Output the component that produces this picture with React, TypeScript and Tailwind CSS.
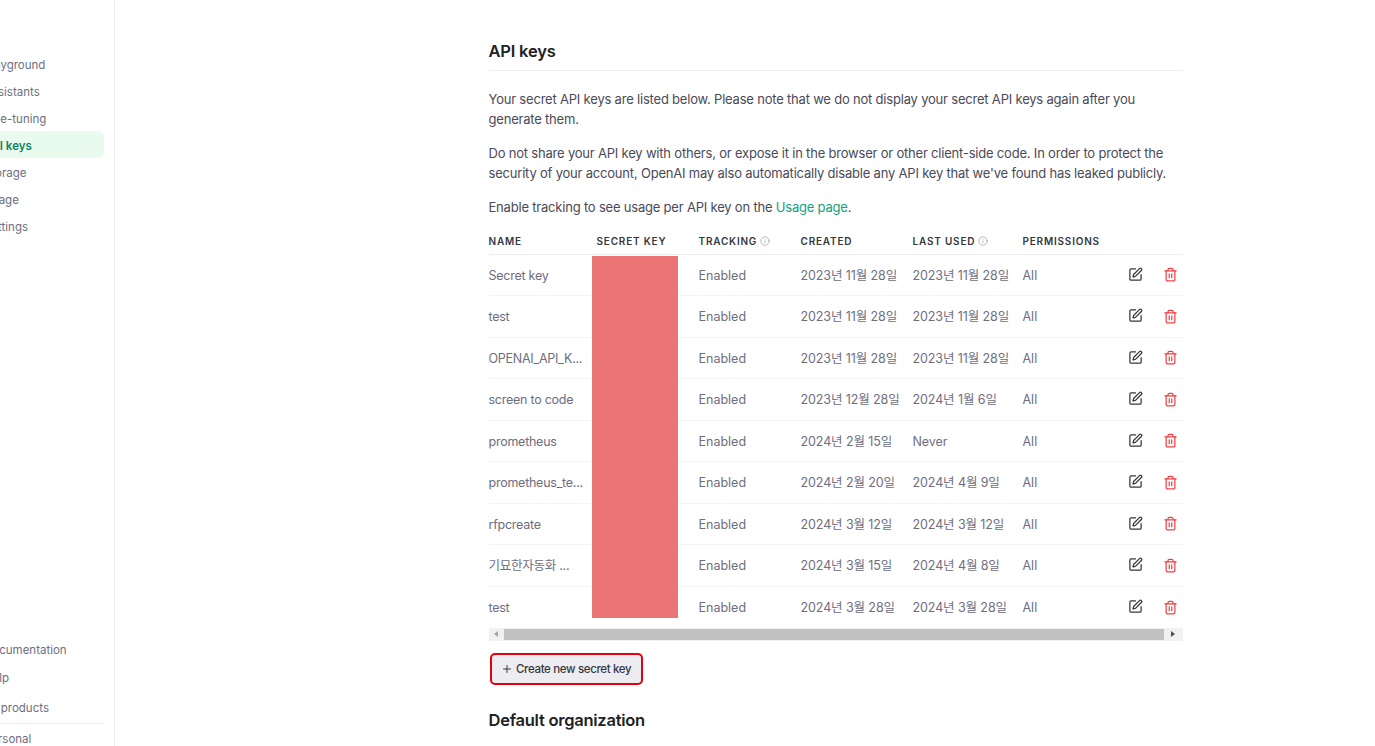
import { Plus, Info, SquarePen, Trash2 } from 'lucide-react'

const sideTop = [
  { label: 'Playground', active: false },
  { label: 'Assistants', active: false },
  { label: 'Fine-tuning', active: false },
  { label: 'API keys', active: true },
  { label: 'Storage', active: false },
  { label: 'Usage', active: false },
  { label: 'Settings', active: false },
]

const keys = [
  { name: 'Secret key', created: '2023년 11월 28일', used: '2023년 11월 28일' },
  { name: 'test', created: '2023년 11월 28일', used: '2023년 11월 28일' },
  { name: 'OPENAI_API_K...', created: '2023년 11월 28일', used: '2023년 11월 28일' },
  { name: 'screen to code', created: '2023년 12월 28일', used: '2024년 1월 6일' },
  { name: 'prometheus', created: '2024년 2월 15일', used: 'Never' },
  { name: 'prometheus_te...', created: '2024년 2월 20일', used: '2024년 4월 9일' },
  { name: 'rfpcreate', created: '2024년 3월 12일', used: '2024년 3월 12일' },
  { name: '기묘한자동화 ...', created: '2024년 3월 15일', used: '2024년 4월 8일' },
  { name: 'test', created: '2024년 3월 28일', used: '2024년 3월 28일' },
]

const App = () => {
  return (
    <div className="flex h-[746px] overflow-hidden bg-white text-[13px] text-[#6e6e80] font-['Inter','Noto_Sans_CJK_KR',sans-serif]">
      {/* Sidebar, cut off by the window's left edge */}
      <aside className="flex h-full w-[115px] shrink-0 flex-col justify-between overflow-hidden border-r border-[#ececf1] pt-[50px]">
        <nav className="flex flex-col">
          {sideTop.map((item) => (
            <div
              key={item.label}
              className={`ml-[-40px] mr-[10px] flex h-[27px] items-center rounded-[6px] pl-[24px] pt-[5px] text-[11.5px] whitespace-nowrap ${
                item.active ? 'bg-[#e9fbee] font-semibold text-[#10845f]' : 'text-[#6e6e80]'
              }`}
            >
              {item.label}
            </div>
          ))}
        </nav>
        <div className="flex flex-col text-[11.5px]">
          <div className="ml-[-40px] flex h-[26px] items-center pl-[24px] pt-[2px] whitespace-nowrap">Documentation</div>
          <div className="ml-[-40px] flex h-[30px] items-center pl-[24px] pt-[2px] whitespace-nowrap">Help</div>
          <div className="ml-[-40px] flex h-[30px] items-center pl-[24px] pt-[2px] whitespace-nowrap">All products</div>
          <div className="mr-[10px] flex h-[23px] items-center border-t border-[#ececf1] pt-[10px]">
            <span className="ml-[-16px] whitespace-nowrap">Personal</span>
          </div>
        </div>
      </aside>

      {/* Main column */}
      <main className="ml-[373.5px] w-[694.5px] shrink-0 pt-[41px]">
        <h2 className="border-b border-[#ececf1] pb-[8px] text-[16.5px] leading-[21px] font-semibold tracking-[-0.2px] text-[#202123]">API keys</h2>
        <p className="mt-[18px] text-[13px] leading-[20px] tracking-[-0.2px] text-[#4a4a57]">
          Your secret API keys are listed below. Please note that we do not display your secret API keys again after you generate them.
        </p>
        <p className="mt-[14px] text-[13px] leading-[20px] tracking-[-0.2px] text-[#4a4a57]">
          Do not share your API key with others, or expose it in the browser or other client-side code. In order to protect the security of your account, OpenAI may also automatically disable any API key that we've found has leaked publicly.
        </p>
        <p className="mt-[14px] text-[13px] leading-[20px] tracking-[-0.2px] text-[#4a4a57]">
          Enable tracking to see usage per API key on the <span className="text-[#10a37f]">Usage page</span>.
        </p>

        {/* Keys table */}
        <div className="relative mt-[11.5px]">
          <div className="flex h-[26px] items-center border-b border-[#ececf1] text-[10px] font-semibold tracking-[0.08em] text-[#353740]">
            <div className="w-[108px]">NAME</div>
            <div className="w-[102px]">SECRET KEY</div>
            <div className="flex w-[102px] items-center gap-[3px]">
              TRACKING <Info className="h-[10px] w-[10px] text-[#8e8ea0]" strokeWidth={1.5} />
            </div>
            <div className="w-[112px]">CREATED</div>
            <div className="flex w-[110px] items-center gap-[3px]">
              LAST USED <Info className="h-[10px] w-[10px] text-[#8e8ea0]" strokeWidth={1.5} />
            </div>
            <div>PERMISSIONS</div>
          </div>
          {keys.map((row, i) => (
            <div key={i} className={`flex h-[41.5px] items-center pt-[3px] whitespace-nowrap text-[12.5px] ${i < keys.length - 1 ? 'border-b border-[#f4f4f6]' : ''}`}>
              <div className="w-[108px] tracking-[-0.25px]">{row.name}</div>
              <div className="w-[102px]" />
              <div className="w-[102px]">Enabled</div>
              <div className="w-[112px] tracking-[-0.1px]">{row.created}</div>
              <div className="w-[110px] tracking-[-0.1px]">{row.used}</div>
              <div className="w-[105.5px]">All</div>
              <SquarePen className="mt-[-4px] h-[15px] w-[15px] text-[#353740]" strokeWidth={2} />
              <Trash2 className="ml-[20px] mt-[-3px] h-[15px] w-[15px] text-[#ef4146]" strokeWidth={2} />
            </div>
          ))}
          {/* Redaction over the secret key column */}
          <div className="absolute left-[103.5px] top-[27px] h-[362px] w-[86px] bg-[#eb7575]" />
        </div>

        {/* Horizontal scrollbar */}
        <div className="mt-[-0.5px] flex h-[13px] items-center bg-[#f1f1f1]">
          <div className="flex w-[15px] justify-center">
            <div className="h-0 w-0 border-y-[3px] border-r-[4px] border-y-transparent border-r-[#a3a3a3]" />
          </div>
          <div className="h-[11px] w-[660px] bg-[#c1c1c1]" />
          <div className="flex flex-1 justify-center">
            <div className="h-0 w-0 border-y-[3px] border-l-[4px] border-y-transparent border-l-[#505050]" />
          </div>
        </div>

        <div className="mt-[12px] ml-[1.5px] flex h-[32px] w-[153px] items-center gap-[3px] rounded-[5px] border-2 border-[#e5000f] bg-[#ececf1] pl-[9px] text-[11.5px] font-medium tracking-[-0.35px] text-[#353740]">
          <Plus className="h-[12px] w-[12px]" strokeWidth={2} />
          <span className="pt-[2px]">Create new secret key</span>
        </div>

        <h2 className="mt-[25px] text-[16.5px] leading-[21px] font-semibold tracking-[-0.25px] text-[#202123]">Default organization</h2>
      </main>
    </div>
  )
}

export default App
